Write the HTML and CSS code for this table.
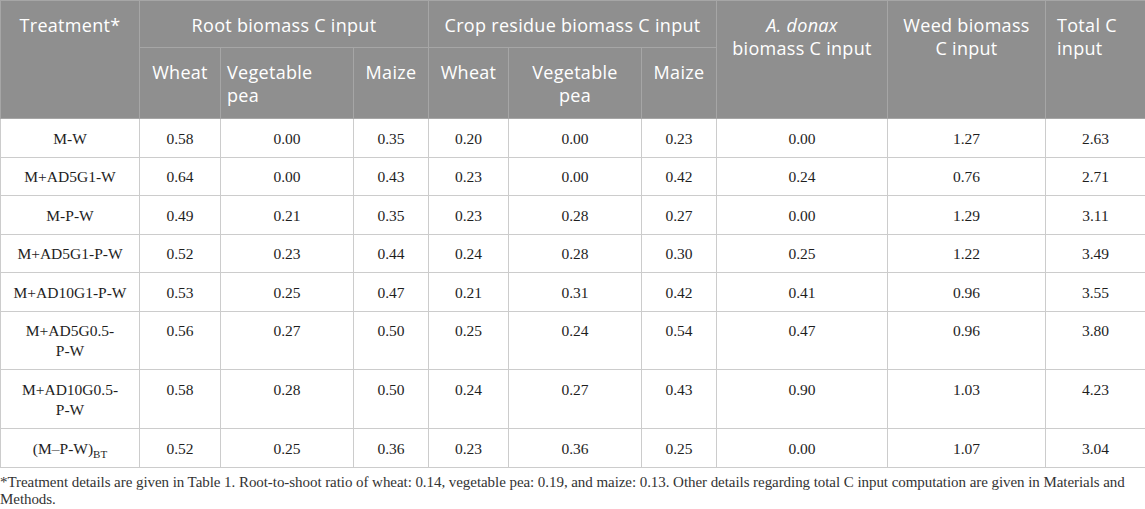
FILE: index.html
```html
<!DOCTYPE html>
<html lang="en">
<head>
<meta charset="UTF-8">
<title>Total C input</title>
<link rel="stylesheet" href="styles.css">
</head>
<body>
<table class="data">
	<colgroup>
		<col class="c-treat">
		<col class="c-wheat">
		<col class="c-pea">
		<col class="c-maize">
		<col class="c-wheat2">
		<col class="c-pea">
		<col class="c-maize">
		<col class="c-donax">
		<col class="c-weed">
		<col class="c-total">
	</colgroup>
	<thead>
		<tr class="h1">
			<th rowspan="2">Treatment*</th>
			<th colspan="3">Root biomass C input</th>
			<th colspan="3">Crop residue biomass C input</th>
			<th rowspan="2"><i>A. donax</i><br>biomass C input</th>
			<th rowspan="2">Weed biomass<br>C input</th>
			<th rowspan="2" class="left">Total C<br>input</th>
		</tr>
		<tr class="h2">
			<th>Wheat</th>
			<th class="left">Vegetable<br>pea</th>
			<th>Maize</th>
			<th>Wheat</th>
			<th>Vegetable<br>pea</th>
			<th>Maize</th>
		</tr>
	</thead>
	<tbody>
		<tr><td>M-W</td><td>0.58</td><td>0.00</td><td>0.35</td><td>0.20</td><td>0.00</td><td>0.23</td><td>0.00</td><td>1.27</td><td>2.63</td></tr>
		<tr><td>M+AD5G1-W</td><td>0.64</td><td>0.00</td><td>0.43</td><td>0.23</td><td>0.00</td><td>0.42</td><td>0.24</td><td>0.76</td><td>2.71</td></tr>
		<tr><td>M-P-W</td><td>0.49</td><td>0.21</td><td>0.35</td><td>0.23</td><td>0.28</td><td>0.27</td><td>0.00</td><td>1.29</td><td>3.11</td></tr>
		<tr><td>M+AD5G1-P-W</td><td>0.52</td><td>0.23</td><td>0.44</td><td>0.24</td><td>0.28</td><td>0.30</td><td>0.25</td><td>1.22</td><td>3.49</td></tr>
		<tr><td>M+AD10G1-P-W</td><td>0.53</td><td>0.25</td><td>0.47</td><td>0.21</td><td>0.31</td><td>0.42</td><td>0.41</td><td>0.96</td><td>3.55</td></tr>
		<tr><td>M+AD5G0.5-<br>P-W</td><td>0.56</td><td>0.27</td><td>0.50</td><td>0.25</td><td>0.24</td><td>0.54</td><td>0.47</td><td>0.96</td><td>3.80</td></tr>
		<tr><td>M+AD10G0.5-<br>P-W</td><td>0.58</td><td>0.28</td><td>0.50</td><td>0.24</td><td>0.27</td><td>0.43</td><td>0.90</td><td>1.03</td><td>4.23</td></tr>
		<tr class="last"><td>(M&ndash;P-W)<sub>BT</sub></td><td>0.52</td><td>0.25</td><td>0.36</td><td>0.23</td><td>0.36</td><td>0.25</td><td>0.00</td><td>1.07</td><td>3.04</td></tr>
	</tbody>
</table>
<p class="note">*Treatment details are given in Table 1. Root-to-shoot ratio of wheat: 0.14, vegetable pea: 0.19, and maize: 0.13. Other details regarding total C input computation are given in Materials and Methods.</p>
</body>
</html>
```

FILE: styles.css
```css
body {
	margin: 0;
	padding: 0;
	background: #ffffff;
}
table.data {
	width: 1145px;
	table-layout: fixed;
	border-collapse: collapse;
}
col.c-treat { width: 139px; }
col.c-wheat { width: 81px; }
col.c-pea { width: 133px; }
col.c-maize { width: 75px; }
col.c-wheat2 { width: 80px; }
col.c-donax { width: 171px; }
col.c-weed { width: 158px; }
col.c-total { width: 100px; }

thead th {
	background: #8f8f8f;
	color: #ffffff;
	font-family: "Open Sans", sans-serif;
	font-size: 18px;
	letter-spacing: 0.3px;
	font-weight: normal;
	line-height: 23px;
	text-align: center;
	vertical-align: top;
	border: 1px solid #a6a6a6;
	padding: 13px 6px 10px;
}
thead tr.h2 th {
	padding: 13px 6px 11px;
}
thead th.left {
	text-align: left;
	padding-left: 11px;
}
tbody td {
	font-family: "Liberation Serif", serif;
	font-size: 15.5px;
	line-height: 20px;
	color: #1e1e1e;
	text-align: center;
	vertical-align: top;
	border: 1px solid #cccccc;
	padding: 9.5px 4px 8px;
}
tbody tr.last td {
	padding-top: 10px;
	padding-bottom: 8px;
}
tbody td sub {
	font-size: 11px;
	line-height: 0;
}
.note {
	margin: 6px 0 0;
	font-family: "Liberation Serif", serif;
	font-size: 15px;
	letter-spacing: -0.06px;
	line-height: 17px;
	color: #333333;
}
```
